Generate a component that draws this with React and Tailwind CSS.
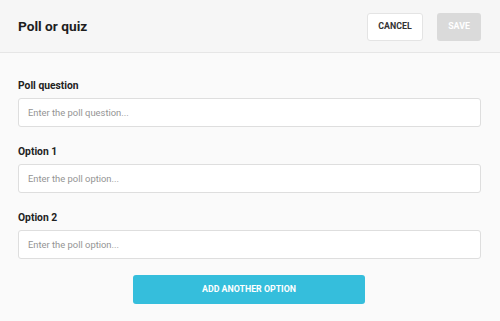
export default function App() {
  const font = { fontFamily: "Roboto, 'Liberation Sans', sans-serif" };
  const Field = ({ label, placeholder }) => (
    <div className="flex flex-col">
      <label className="text-[10.3px] font-bold text-[#222] leading-[16px] h-[16px] mb-[4px]">{label}</label>
      <input
        className="h-[29px] w-full rounded-[3px] border border-[#dedede] bg-white px-[9px] text-[9.4px] text-[#333] placeholder:text-[#949494] outline-none"
        placeholder={placeholder}
      />
    </div>
  );
  return (
    <div className="w-[500px] h-[321px] bg-[#fafafa] flex flex-col overflow-hidden" style={font}>
      <div className="h-[53px] shrink-0 bg-[#f6f6f6] border-b border-[#e6e6e6] flex items-center justify-between pl-[18px] pr-[19px]">
        <h1 className="text-[13.7px] font-bold text-[#1e1e1e]">Poll or quiz</h1>
        <div className="flex items-center gap-[14px] pt-[1px]">
          <button className="h-[28px] w-[56px] bg-white border border-[#e4e4e4] rounded-[3px] text-[8.8px] font-bold text-[#333]">CANCEL</button>
          <button className="h-[28px] w-[44px] bg-[#dadada] rounded-[3px] text-[8.8px] font-bold text-white">SAVE</button>
        </div>
      </div>
      <div className="flex flex-col pl-[18px] pr-[19px] pt-[25px] gap-[17px]">
        <Field label="Poll question" placeholder="Enter the poll question..." />
        <Field label="Option 1" placeholder="Enter the poll option..." />
        <Field label="Option 2" placeholder="Enter the poll option..." />
      </div>
      <div className="flex justify-center pt-[16px]">
        <button className="ml-[-2px] h-[29px] w-[232px] rounded-[3px] bg-[#35bedc] text-white text-[8.8px] font-bold">ADD ANOTHER OPTION</button>
      </div>
    </div>
  );
}
